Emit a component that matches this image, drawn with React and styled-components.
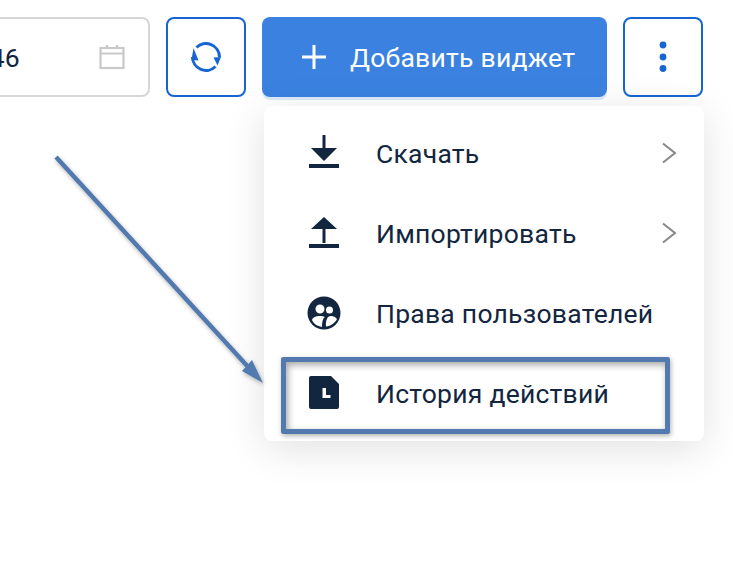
import styled, { createGlobalStyle } from 'styled-components';

const GlobalStyle = createGlobalStyle`
    html, body {
        margin: 0;
        padding: 0;
        background: #fff;
    }
    body {
        font-family: Roboto, "Noto Sans", sans-serif;
        overflow: hidden;
    }
`;

const Page = styled.div`
    position: relative;
    width: 733px;
    height: 580px;
    overflow: hidden;
`;

const Toolbar = styled.div`
    display: flex;
    justify-content: flex-end;
    gap: 16px;
    padding: 17px 30px 0 0;
`;

const DateField = styled.div`
    flex: none;
    box-sizing: border-box;
    height: 80px;
    display: flex;
    align-items: center;
    padding: 0 23px 0 20px;
    border: 2px solid #d6d6d6;
    border-radius: 8px;
    font-size: 26.5px;
    letter-spacing: 0.25px;
    color: #12263f;
`;

const DateValue = styled.span`
    white-space: nowrap;
    margin-right: 79px;
`;

const IconButton = styled.button`
    flex: none;
    box-sizing: border-box;
    width: 80px;
    height: 80px;
    padding: 0;
    display: flex;
    align-items: center;
    justify-content: center;
    background: #fff;
    border: 2px solid #1765d3;
    border-radius: 8px;
    color: #1765d3;
`;

const AddButton = styled.button`
    flex: none;
    box-sizing: border-box;
    width: 345px;
    height: 80px;
    padding: 0 0 0 39px;
    display: flex;
    align-items: center;
    gap: 23px;
    background: #3b82e0;
    border: none;
    border-radius: 8px;
    box-shadow: 0 3px 0 #dcebf9;
    color: #fff;
    font-family: inherit;
    font-size: 26.5px;
    letter-spacing: 0.25px;
`;

const Menu = styled.div`
    position: absolute;
    left: 264px;
    top: 106px;
    box-sizing: border-box;
    width: 440px;
    height: 335px;
    padding: 7px 0 8px;
    background: #fff;
    border-radius: 8px;
    box-shadow: 0 8px 40px rgba(0, 0, 0, 0.12);
`;

const MenuRow = styled.div`
    height: 80px;
    display: flex;
    align-items: center;
    padding: 0 26px 0 40px;
    color: #12263f;
    font-size: 26.5px;
    letter-spacing: 0.25px;
`;

const RowIcon = styled.svg`
    flex: none;
    width: 40px;
    height: 40px;
    margin-right: 33px;
    fill: #12263f;
`;

const RowLabel = styled.span`
    flex: 1;
    margin-left: -1px;
    padding-top: 1px;
`;

const Highlight = styled.div`
    position: absolute;
    left: 281px;
    top: 357px;
    box-sizing: border-box;
    width: 389px;
    height: 77px;
    border: 5px solid #527aae;
    border-radius: 2px;
    box-shadow: 1px 2px 5px rgba(0, 0, 0, 0.3), inset 2px 3px 7px rgba(0, 0, 0, 0.35);
`;

const Arrow = styled.svg`
    position: absolute;
    left: 40px;
    top: 140px;
    width: 240px;
    height: 260px;
`;

const Chevron = () => (
    <svg width="18" height="24" viewBox="0 0 18 24" fill="none" stroke="#888" strokeWidth="2">
        <path d="M3 2.5 15 12 3 21.5" />
    </svg>
);

const CalendarIcon = () => (
    <svg width="26" height="26" viewBox="0 0 26 26" fill="none" stroke="#c9c9c9" strokeWidth="2.2">
        <rect x="1.5" y="4" width="23" height="20" />
        <path d="M1.5 9.500h23M8 1v4M18 1v4" />
    </svg>
);

const RefreshIcon = () => (
    <svg width="32" height="32" viewBox="0 0 32 32" fill="none">
        <path d="M6.500 6.500A13.500 13.500 0 0 1 29.500 16" stroke="currentColor" strokeWidth="3" />
        <path d="M2.500 16A13.500 13.500 0 0 0 25.500 25.500" stroke="currentColor" strokeWidth="3" />
        <path d="M3.500 7 8.500 19.500 1.500 19z" fill="currentColor" />
        <path d="M27.500 24.500 23.500 16.500 31 16z" fill="currentColor" />
    </svg>
);

const PlusIcon = () => (
    <svg width="26" height="26" viewBox="0 0 26 26" fill="none" stroke="#fff" strokeWidth="3">
        <path d="M13 1v24M1 13h24" />
    </svg>
);

const DotsIcon = () => (
    <svg width="8" height="32" viewBox="0 0 8 32" fill="currentColor">
        <circle cx="4" cy="4" r="3.4" />
        <circle cx="4" cy="16" r="3.4" />
        <circle cx="4" cy="27.5" r="3.4" />
    </svg>
);

const DownloadPath = () => (
    <path d="M18.500 2h3v13H33L20 28 7 15h11.500zM5 31h30v4H5z" />
);

const UploadPath = () => (
    <path d="M20 4 33 16H21.500V30h-3V16H7zM5 31h30v4H5z" />
);

const UsersPath = () => (
    <path
        fillRule="evenodd"
        d="M20 3.500a16.500 16.500 0 1 0 0 33 16.500 16.500 0 0 0 0-33zM16 11.500a4.500 4.500 0 1 1 0 9 4.500 4.500 0 0 1 0-9zM25.500 13.500a3.500 3.500 0 1 1 0 7 3.500 3.500 0 0 1 0-7zM8 27c1-3 4-4 8-4 2 0 4 .5 5 1-2 1.500-3 4-3 10-5-1-8-3-10-7zM22 33.500c-.5-5.500 1-10.500 5-10.500 2.500 0 4.500 1 6 3-2 4-6 7-11 7.500z"
    />
);

const HistoryPath = () => (
    <path
        fillRule="evenodd"
        d="M7 3h20l8 8v23a2 2 0 0 1-2 2H7a2 2 0 0 1-2-2V5a2 2 0 0 1 2-2zM18.500 15v10h8v-3h-4.500v-7z"
    />
);

const items = [
    { label: 'Скачать', icon: <DownloadPath />, more: true },
    { label: 'Импортировать', icon: <UploadPath />, more: true },
    { label: 'Права пользователей', icon: <UsersPath /> },
    { label: 'История действий', icon: <HistoryPath /> },
];

export default function App() {
    return (
        <Page>
            <GlobalStyle />
            <Toolbar>
                <DateField>
                    <DateValue>12.09.2022 10:46</DateValue>
                    <CalendarIcon />
                </DateField>
                <IconButton><RefreshIcon /></IconButton>
                <AddButton><PlusIcon />Добавить виджет</AddButton>
                <IconButton><DotsIcon /></IconButton>
            </Toolbar>
            <Menu>
                {items.map((item) => (
                    <MenuRow key={item.label}>
                        <RowIcon viewBox="0 0 40 40">{item.icon}</RowIcon>
                        <RowLabel>{item.label}</RowLabel>
                        {item.more && <Chevron />}
                    </MenuRow>
                ))}
            </Menu>
            <Highlight />
            <Arrow viewBox="0 0 240 260">
                <defs>
                    <filter id="arrowShadow" x="-10%" y="-10%" width="120%" height="120%">
                        <feDropShadow dx="1" dy="2" stdDeviation="2" floodColor="#000" floodOpacity="0.3" />
                    </filter>
                </defs>
                <g filter="url(#arrowShadow)">
                    <path d="M16 17 L210 229" stroke="#527aae" strokeWidth="4.5" fill="none" />
                    <path d="M223 243 L202 231 L212 220 z" fill="#527aae" />
                </g>
            </Arrow>
        </Page>
    );
}
